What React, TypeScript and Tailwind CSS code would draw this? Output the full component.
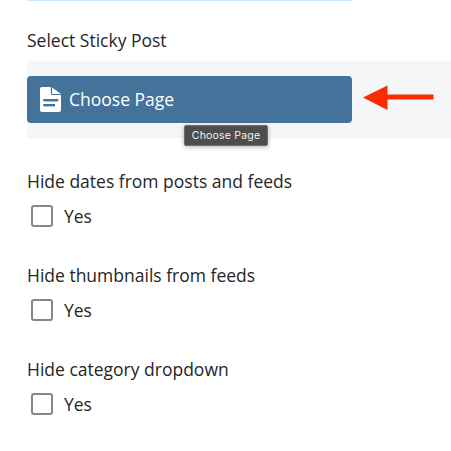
import React from 'react'

function YesOption({ label }: { label: string }) {
  return (
    <div className="mb-[36px]">
      <p className="h-[24px] text-[17.5px] leading-[22px] text-[#262626]">{label}</p>
      <label className="mt-[10px] flex h-[24px] items-center pl-[4px]">
        <span className="h-[22px] w-[22px] rounded-[3px] border-[2.5px] border-[#85858c] bg-white" />
        <span className="mb-[1px] ml-[11px] text-[17.5px] leading-[24px] text-[#262626]">Yes</span>
      </label>
    </div>
  )
}

export default function App() {
  return (
    <div className="h-[451px] w-[451px] overflow-hidden bg-white pl-[27px] font-['Open_Sans','Noto_Sans',sans-serif]">
      <div className="h-[1px] w-[325px] rounded-b bg-[#cfe8fb]" />
      <p className="mt-[28px] h-[24px] text-[17.5px] leading-[22px] text-[#262626]">Select Sticky Post</p>
      <div className="relative mt-[8px] h-[77px] bg-[#f5f6f8] pt-[15px]">
        <button className="flex h-[47px] w-[325px] items-center rounded-[4px] bg-[#44729b] pl-[13px] text-[17.5px] text-white">
          <svg width="21" height="25" viewBox="0 0 21 25" className="mr-[8px]">
            <path
              fill="#fff"
              d="M2 0h8.8v6.5a1.5 1.5 0 0 0 1.5 1.5h8.7v15a2 2 0 0 1-2 2H2a2 2 0 0 1-2-2V2a2 2 0 0 1 2-2z"
            />
            <path fill="#fff" d="M12 0.4 21 7h-9z" />
            <rect x="3.3" y="12" width="15" height="2.4" fill="#44729b" />
            <rect x="3.3" y="17" width="11.7" height="2.4" fill="#44729b" />
          </svg>
          Choose Page
        </button>
        <div className="absolute left-[157px] top-[64px] flex h-[21px] w-[84px] items-center justify-center rounded-[2px] border border-[#6e6e6e] bg-[#4d4d4d] font-['Inter',sans-serif] text-[10.5px] tracking-[0.2px] text-[#f2f2f2] shadow-[0_1px_5px_rgba(0,0,0,0.3)]">
          Choose Page
        </div>
        <svg width="72" height="26" viewBox="0 0 72 26" className="absolute left-[336px] top-[24px]">
          <path fill="#fc2a00" d="M0 12.5 24.5 0.5V9.5H70.5V14.5H24.5V25z" />
        </svg>
      </div>
      <div className="mt-[32px]">
        <YesOption label="Hide dates from posts and feeds" />
        <YesOption label="Hide thumbnails from feeds" />
        <YesOption label="Hide category dropdown" />
      </div>
    </div>
  )
}
